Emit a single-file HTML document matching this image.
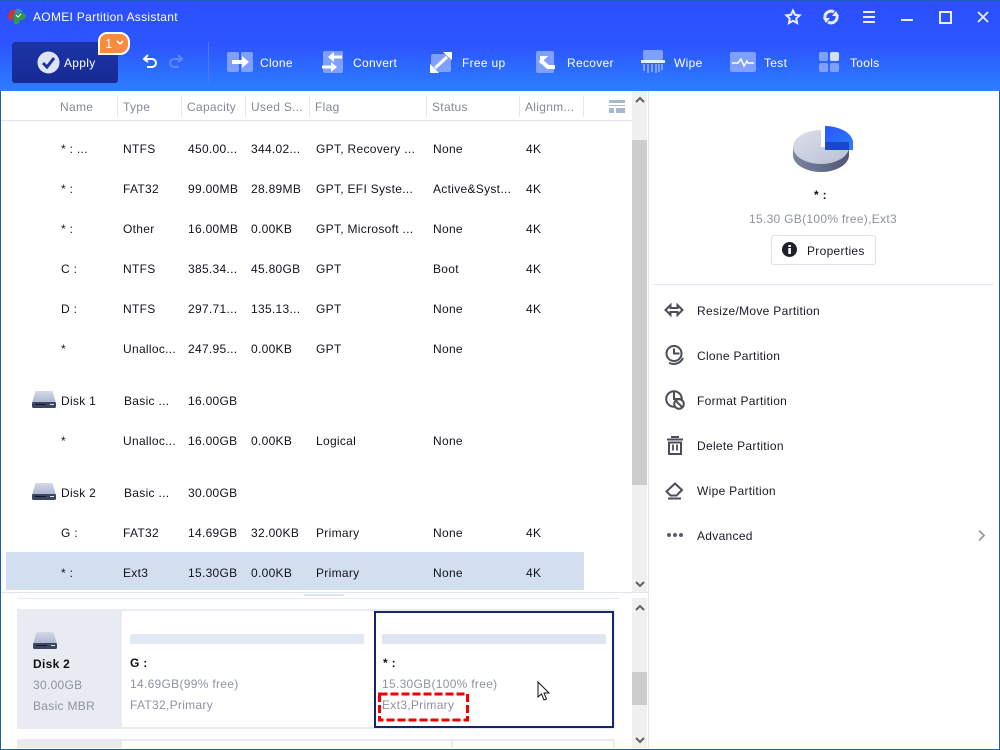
<!DOCTYPE html>
<html><head><meta charset="utf-8"><style>
html,body{margin:0;padding:0;background:#fff}
#p{position:relative;width:1000px;height:750px;overflow:hidden;background:#fff;font:12px "Liberation Sans","DejaVu Sans",sans-serif;color:#12121e}
#p div,#p span.t,#p svg{position:absolute}
.t{position:absolute;white-space:nowrap;line-height:16px;letter-spacing:.3px}
.h{color:#858a97;top:99px}
.w{color:#fff}
.g{color:#8f939f}
.s{position:absolute;width:1px;top:96px;height:21px;background:#e6eaf0}
.m{left:697px;color:#1a1a26}
</style></head><body><div id="p">
<div style="left:0;top:0;width:1000px;height:91px;background:linear-gradient(#2b4fff 0,#2d55ff 50%,#2b7fff 100%)"></div>
<div style="left:0;top:0;width:1000px;height:1px;background:#1a5cb8"></div>

<svg style="left:7px;top:8px" width="20" height="17" viewBox="0 0 20 17"><path d="M1 9C1 4 5 1 9 1L9 5L6 7L6 12L2 12Z" fill="#d8302c"/><path d="M9 1C11 0 15 1 16 4L10 6L7 6Z" fill="#2c8fc8"/><path d="M6 7L14 4L19 7L18 11L13 12L12 16L7 16L7 12Z" fill="#2f9a4c"/><path d="M9 7l2 2 3-3" stroke="#fff" fill="none"/></svg>
<span class="t w" style="left:33px;top:9px">AOMEI Partition Assistant</span>

<svg style="left:784px;top:8px" width="18" height="18" viewBox="0 0 18 18"><path d="M9 2.500l2 4.300 4.600.6-3.400 3.100.9 4.600L9 12.800l-4.100 2.300.9-4.600L2.400 7.400l4.600-.6z" fill="none" stroke="#e8eeff" stroke-width="2"/></svg>
<svg style="left:822px;top:8px" width="18" height="18" viewBox="0 0 18 18"><path d="M3 10a6 6 0 0 1 9-6M15 8a6 6 0 0 1-9 6" fill="none" stroke="#e8eeff" stroke-width="3"/><path d="M10 8h7l-3-5zM8 10H1l3 5z" fill="#e8eeff"/></svg>
<div style="left:863px;top:11px;width:12px;height:2px;background:#e8eeff"></div>
<div style="left:863px;top:16px;width:12px;height:2px;background:#e8eeff"></div>
<div style="left:863px;top:21px;width:12px;height:2px;background:#e8eeff"></div>
<div style="left:901px;top:19px;width:12px;height:2px;background:#e8eeff"></div>
<div style="left:939px;top:11px;width:9px;height:9px;border:2px solid #e8eeff"></div>
<svg style="left:977px;top:11px" width="12" height="12" viewBox="0 0 12 12"><path d="M1 1l10 10M11 1L1 11" stroke="#e8eeff" stroke-width="1.800"/></svg>

<div style="left:12px;top:42px;width:106px;height:41px;border-radius:3px;background:linear-gradient(#1b35a5,#172a96)"></div>
<svg style="left:37px;top:51px" width="23" height="23" viewBox="0 0 23 23"><circle cx="11.500" cy="11.500" r="11" fill="#dfe3f2"/><path d="M6 12l4 4 7-9" fill="none" stroke="#1c339e" stroke-width="3"/></svg>
<span class="t w" style="left:64px;top:55px">Apply</span>
<div style="left:98px;top:32px;width:28px;height:19px;background:#fb8a3c;border:2px solid #fff;border-radius:9px 10px 10px 0"></div>
<span class="t w" style="left:105px;top:36px;font-size:13px">1</span>
<svg style="left:116px;top:40px" width="8" height="6" viewBox="0 0 8 6"><path d="M1 1l3 3 3-3" fill="none" stroke="#fff" stroke-width="1.600"/></svg>

<svg style="left:142px;top:54px" width="16" height="14" viewBox="0 0 16 14"><path d="M6 1L2 5l4 3M2 5h8a4 4 0 0 1 0 8H5" fill="none" stroke="#fff" stroke-width="2"/></svg>
<svg style="left:168px;top:54px" width="16" height="14" viewBox="0 0 16 14"><path d="M10 1l4 4-4 3M14 5H6a4 4 0 0 0 0 8h5" fill="none" stroke="#5e87ff" stroke-width="2"/></svg>
<div style="left:208px;top:42px;width:1px;height:40px;background:#4b78ff"></div>

<svg style="left:227px;top:52px" width="26" height="20" viewBox="0 0 26 20"><rect x="0" width="12" height="20" rx="2" fill="#7fa0ff"/><rect x="14" width="12" height="20" rx="2" fill="#7fa0ff"/><path d="M5 10h13" stroke="#fff" stroke-width="4"/><path d="M15 4l7 6-7 6z" fill="#fff"/></svg>
<span class="t w" style="left:260px;top:55px">Clone</span>
<svg style="left:322px;top:51px" width="22" height="22" viewBox="0 0 22 22"><rect x="1" y="0" width="20" height="22" rx="2" fill="#7fa0ff"/><path d="M20 6H10" stroke="#fff" stroke-width="3"/><path d="M12 1L6 6l6 5z" fill="#fff"/><path d="M0 16h10" stroke="#fff" stroke-width="3"/><path d="M9 11l6 5-6 5z" fill="#fff"/></svg>
<span class="t w" style="left:353px;top:55px">Convert</span>
<svg style="left:430px;top:52px" width="22" height="21" viewBox="0 0 22 21"><rect x="1" y="2" width="20" height="18" rx="2" fill="#7fa0ff"/><path d="M5 16L17 5" stroke="#fff" stroke-width="3"/><path d="M13 0h9v8zM0 12v9h9z" fill="#fff"/></svg>
<span class="t w" style="left:462px;top:55px">Free up</span>
<svg style="left:536px;top:51px" width="23" height="22" viewBox="0 0 23 22"><rect width="18" height="22" rx="2" fill="#7fa0ff"/><path d="M4 9l8 7h7" fill="none" stroke="#fff" stroke-width="4"/><path d="M4 5h8l-8 8z" fill="#fff"/></svg>
<span class="t w" style="left:567px;top:55px">Recover</span>
<svg style="left:641px;top:50px" width="24" height="24" viewBox="0 0 24 24"><rect x="2" width="20" height="10" rx="2" fill="#7fa0ff"/><rect x="0" y="10" width="24" height="3" fill="#e8eeff"/><path d="M3 14v7M7 14v9M11 14v8M15 14v9M18 14v8M21 14v6" stroke="#7fa0ff" stroke-width="2"/></svg>
<span class="t w" style="left:674px;top:55px">Wipe</span>
<svg style="left:730px;top:52px" width="26" height="20" viewBox="0 0 26 20"><rect width="26" height="20" rx="2" fill="#7fa0ff"/><path d="M2 11h6l3-4 3 7 3-5 1 2h6" fill="none" stroke="#fff" stroke-width="1.500"/></svg>
<span class="t w" style="left:764px;top:55px">Test</span>
<svg style="left:819px;top:52px" width="20" height="20" viewBox="0 0 20 20"><rect width="9" height="9" rx="2" fill="#7fa0ff"/><rect x="11" width="9" height="9" rx="2" fill="#d5deff"/><rect y="11" width="9" height="9" rx="2" fill="#7fa0ff"/><rect x="11" y="11" width="9" height="9" rx="2" fill="#7fa0ff"/></svg>
<span class="t w" style="left:850px;top:55px">Tools</span>

<span class="t h" style="left:60px">Name</span><span class="s" style="left:117px"></span>
<span class="t h" style="left:123px">Type</span><span class="s" style="left:181px"></span>
<span class="t h" style="left:187px">Capacity</span><span class="s" style="left:245px"></span>
<span class="t h" style="left:251px">Used S...</span><span class="s" style="left:309px"></span>
<span class="t h" style="left:315px">Flag</span><span class="s" style="left:426px"></span>
<span class="t h" style="left:432px">Status</span><span class="s" style="left:519px"></span>
<span class="t h" style="left:525px">Alignm...</span><span class="s" style="left:583px"></span>
<div style="left:609px;top:100px;width:16px;height:3px;background:#a9b6cc"></div>
<div style="left:609px;top:105px;width:16px;height:1px;background:#a9b6cc"></div>
<div style="left:609px;top:108px;width:5px;height:5px;background:#a9b6cc"></div>
<div style="left:616px;top:108px;width:9px;height:5px;background:#a9b6cc"></div>
<div style="left:0;top:120px;width:632px;height:1px;background:#dfe5ee"></div>

<div style="left:6px;top:552px;width:578px;height:38px;background:#d3dfee"></div>

<span class="t" style="left:61px;top:141px">* : ...</span><span class="t" style="left:123px;top:141px">NTFS</span><span class="t" style="left:188px;top:141px">450.00...</span><span class="t" style="left:251px;top:141px">344.02...</span><span class="t" style="left:316px;top:141px">GPT, Recovery ...</span><span class="t" style="left:433px;top:141px">None</span><span class="t" style="left:526px;top:141px">4K</span>
<span class="t" style="left:61px;top:181px">* :</span><span class="t" style="left:123px;top:181px">FAT32</span><span class="t" style="left:188px;top:181px">99.00MB</span><span class="t" style="left:251px;top:181px">28.89MB</span><span class="t" style="left:316px;top:181px">GPT, EFI Syste...</span><span class="t" style="left:433px;top:181px">Active&amp;Syst...</span><span class="t" style="left:526px;top:181px">4K</span>
<span class="t" style="left:61px;top:221px">* :</span><span class="t" style="left:123px;top:221px">Other</span><span class="t" style="left:188px;top:221px">16.00MB</span><span class="t" style="left:251px;top:221px">0.00KB</span><span class="t" style="left:316px;top:221px">GPT, Microsoft ...</span><span class="t" style="left:433px;top:221px">None</span><span class="t" style="left:526px;top:221px">4K</span>
<span class="t" style="left:61px;top:261px">C :</span><span class="t" style="left:123px;top:261px">NTFS</span><span class="t" style="left:188px;top:261px">385.34...</span><span class="t" style="left:251px;top:261px">45.80GB</span><span class="t" style="left:316px;top:261px">GPT</span><span class="t" style="left:433px;top:261px">Boot</span><span class="t" style="left:526px;top:261px">4K</span>
<span class="t" style="left:61px;top:301px">D :</span><span class="t" style="left:123px;top:301px">NTFS</span><span class="t" style="left:188px;top:301px">297.71...</span><span class="t" style="left:251px;top:301px">135.13...</span><span class="t" style="left:316px;top:301px">GPT</span><span class="t" style="left:433px;top:301px">None</span><span class="t" style="left:526px;top:301px">4K</span>
<span class="t" style="left:61px;top:341px">*</span><span class="t" style="left:123px;top:341px">Unalloc...</span><span class="t" style="left:188px;top:341px">247.95...</span><span class="t" style="left:251px;top:341px">0.00KB</span><span class="t" style="left:316px;top:341px">GPT</span><span class="t" style="left:433px;top:341px">None</span>

<svg style="left:32px;top:391px" width="24" height="18" viewBox="0 0 24 18"><defs><linearGradient id="d" x1="0" y1="0" x2="0" y2="1"><stop offset="0" stop-color="#d4d9e8"/><stop offset="1" stop-color="#aab4cc"/></linearGradient></defs><path d="M3.500 0h17L24 12H0z" fill="url(#d)"/><rect x="0" y="11" width="24" height="6" rx="1.500" fill="#3d4560"/><rect x="3" y="13" width="11" height="1" fill="#14182a"/><rect x="18" y="13" width="4" height="1" fill="#dfe3ee"/></svg>
<span class="t" style="left:61px;top:393px">Disk 1</span><span class="t" style="left:124px;top:393px">Basic ...</span><span class="t" style="left:188px;top:393px">16.00GB</span>
<span class="t" style="left:61px;top:433px">*</span><span class="t" style="left:123px;top:433px">Unalloc...</span><span class="t" style="left:188px;top:433px">16.00GB</span><span class="t" style="left:251px;top:433px">0.00KB</span><span class="t" style="left:316px;top:433px">Logical</span><span class="t" style="left:433px;top:433px">None</span>

<svg style="left:32px;top:483px" width="24" height="18" viewBox="0 0 24 18"><path d="M3.500 0h17L24 12H0z" fill="url(#d)"/><rect x="0" y="11" width="24" height="6" rx="1.500" fill="#3d4560"/><rect x="3" y="13" width="11" height="1" fill="#14182a"/><rect x="18" y="13" width="4" height="1" fill="#dfe3ee"/></svg>
<span class="t" style="left:61px;top:485px">Disk 2</span><span class="t" style="left:124px;top:485px">Basic ...</span><span class="t" style="left:188px;top:485px">30.00GB</span>
<span class="t" style="left:61px;top:525px">G :</span><span class="t" style="left:123px;top:525px">FAT32</span><span class="t" style="left:188px;top:525px">14.69GB</span><span class="t" style="left:251px;top:525px">32.00KB</span><span class="t" style="left:316px;top:525px">Primary</span><span class="t" style="left:433px;top:525px">None</span><span class="t" style="left:526px;top:525px">4K</span>
<span class="t" style="left:61px;top:565px">* :</span><span class="t" style="left:123px;top:565px">Ext3</span><span class="t" style="left:188px;top:565px">15.30GB</span><span class="t" style="left:251px;top:565px">0.00KB</span><span class="t" style="left:316px;top:565px">Primary</span><span class="t" style="left:433px;top:565px">None</span><span class="t" style="left:526px;top:565px">4K</span>

<div style="left:632px;top:91px;width:15px;height:501px;background:#f0f0f0"></div>
<div style="left:632px;top:140px;width:15px;height:345px;background:#cdcdcd"></div>
<svg style="left:635px;top:96px" width="10" height="7" viewBox="0 0 10 7"><path d="M1 6l4-4 4 4" fill="none" stroke="#606060" stroke-width="2"/></svg>
<svg style="left:635px;top:581px" width="10" height="7" viewBox="0 0 10 7"><path d="M1 1l4 4 4-4" fill="none" stroke="#606060" stroke-width="2"/></svg>

<div style="left:0;top:592px;width:648px;height:1px;background:#dfe5ee"></div>
<div style="left:304px;top:594px;width:40px;height:2px;background:#dfe5ee"></div>
<div style="left:17px;top:598px;width:603px;height:1px;background:#e6eaf0"></div>

<div style="left:17px;top:609px;width:598px;height:120px;background:#e8ebf1"></div>
<div style="left:122px;top:611px;width:252px;height:116px;background:#fff"></div>
<div style="left:374px;top:611px;width:236px;height:113px;background:#fff;border:2px solid #14266e"></div>
<svg style="left:33px;top:632px" width="24" height="18" viewBox="0 0 24 18"><path d="M3.500 0h17L24 12H0z" fill="url(#d)"/><rect x="0" y="11" width="24" height="6" rx="1.500" fill="#3d4560"/><rect x="3" y="13" width="11" height="1" fill="#14182a"/><rect x="18" y="13" width="4" height="1" fill="#dfe3ee"/></svg>
<span class="t" style="left:33px;top:656px;font-weight:bold;color:#111">Disk 2</span>
<span class="t g" style="left:33px;top:677px">30.00GB</span>
<span class="t g" style="left:33px;top:698px">Basic MBR</span>

<div style="left:130px;top:634px;width:234px;height:10px;background:#e3e9f3;border-radius:2px"></div>
<span class="t" style="left:130px;top:655px;font-weight:bold;color:#111">G :</span>
<span class="t g" style="left:130px;top:676px">14.69GB(99% free)</span>
<span class="t g" style="left:130px;top:697px">FAT32,Primary</span>

<div style="left:382px;top:634px;width:224px;height:10px;background:#e0e6f1;border-radius:2px"></div>
<span class="t" style="left:383px;top:655px;font-weight:bold;color:#111">* :</span>
<span class="t g" style="left:382px;top:676px">15.30GB(100% free)</span>
<span class="t g" style="left:382px;top:697px">Ext3,Primary</span>
<svg style="left:377px;top:691px" width="93" height="32" viewBox="0 0 93 32"><rect x="2.500" y="3" width="88" height="26" fill="none" stroke="#f00000" stroke-width="3" stroke-dasharray="8 3"/></svg>
<svg style="left:536px;top:680px" width="15" height="22" viewBox="0 0 15 22"><path d="M2 2v15l3.500-3 2.500 6 2.500-1-2.500-6h5z" fill="#fff" stroke="#111" stroke-width="1"/></svg>

<div style="left:17px;top:739px;width:598px;height:9px;background:#e8ebf1"></div>
<div style="left:122px;top:741px;width:329px;height:7px;background:#fff"></div>
<div style="left:453px;top:741px;width:160px;height:7px;background:#fff"></div>

<div style="left:632px;top:598px;width:15px;height:150px;background:#f0f0f0"></div>
<div style="left:632px;top:672px;width:15px;height:33px;background:#cdcdcd"></div>
<svg style="left:635px;top:604px" width="10" height="7" viewBox="0 0 10 7"><path d="M1 6l4-4 4 4" fill="none" stroke="#606060" stroke-width="2"/></svg>
<svg style="left:635px;top:737px" width="10" height="7" viewBox="0 0 10 7"><path d="M1 1l4 4 4-4" fill="none" stroke="#606060" stroke-width="2"/></svg>
<div style="left:648px;top:91px;width:1px;height:657px;background:#dfe6f2"></div>

<svg style="left:792px;top:125px" width="62" height="48" viewBox="0 0 62 48"><defs><linearGradient id="a" x1="0" y1="0" x2="1" y2="1"><stop offset="0" stop-color="#dde0ea"/><stop offset="1" stop-color="#b9c0d6"/></linearGradient><linearGradient id="b" x1="0" y1="0" x2="1" y2="0"><stop offset="0" stop-color="#7b84a0"/><stop offset="1" stop-color="#4f5876"/></linearGradient><linearGradient id="c" x1="0" y1="0" x2="1" y2="1"><stop offset="0" stop-color="#2a55ff"/><stop offset="1" stop-color="#2b7fff"/></linearGradient></defs><path d="M1 22v8A28 17 0 0 0 57 30v-8z" fill="url(#b)"/><path d="M29 22V5A28 17 0 1 0 57 22Z" fill="url(#a)"/><path d="M33 1A28 17 0 0 1 61 17V25H33Z" fill="url(#c)"/><path d="M33 17H57V25H33Z" fill="#1c47c8"/></svg>
<span class="t" style="left:814px;top:187px;font-weight:bold;color:#111">* :</span>
<span class="t g" style="left:749px;top:211px">15.30 GB(100% free),Ext3</span>
<div style="left:771px;top:235px;width:103px;height:28px;border:1px solid #dbe2ec;border-radius:3px;background:#fff"></div>
<svg style="left:782px;top:242px" width="15" height="15" viewBox="0 0 15 15"><circle cx="7.500" cy="7.500" r="7.500" fill="#1c1f2c"/><rect x="6.300" y="6" width="2.600" height="6" fill="#fff"/><rect x="6.300" y="3" width="2.600" height="2" fill="#fff"/></svg>
<span class="t" style="left:807px;top:243px;color:#1a1a26">Properties</span>
<div style="left:653px;top:284px;width:341px;height:1px;background:#e3e9f3"></div>

<svg style="left:664px;top:302px" width="20" height="16" viewBox="0 0 20 16"><path d="M1.500 8l5-5v3h7V3l5 5-5 5v-3h-7v3z" fill="none" stroke="#4a4e58" stroke-width="2"/></svg>
<span class="t m" style="top:303px">Resize/Move Partition</span>
<svg style="left:665px;top:345px" width="20" height="20" viewBox="0 0 20 20"><circle cx="9" cy="8.500" r="7.500" fill="none" stroke="#4a4e58" stroke-width="2"/><path d="M9 3.500v5h5.500" fill="none" stroke="#4a4e58" stroke-width="2"/><path d="M4 18c5 2 11 1 14-5" fill="none" stroke="#4a4e58" stroke-width="2"/></svg>
<span class="t m" style="top:348px">Clone Partition</span>
<svg style="left:665px;top:390px" width="20" height="20" viewBox="0 0 20 20"><circle cx="9" cy="9" r="7.800" fill="none" stroke="#4a4e58" stroke-width="2"/><path d="M9 1v8h8" fill="none" stroke="#4a4e58" stroke-width="2"/><circle cx="14" cy="14" r="4.800" fill="#fff" stroke="#4a4e58" stroke-width="2"/><path d="M10.800 10.800l6.400 6.400" stroke="#4a4e58" stroke-width="2"/></svg>
<span class="t m" style="top:393px">Format Partition</span>
<svg style="left:667px;top:436px" width="16" height="19" viewBox="0 0 16 19"><path d="M0 3.500h16" stroke="#4a4e58" stroke-width="2"/><path d="M4 1h8" stroke="#4a4e58" stroke-width="2"/><path d="M2 6.500h12V18H2z" fill="none" stroke="#4a4e58" stroke-width="2"/><path d="M6 8.500v6M10 8.500v6" stroke="#4a4e58" stroke-width="1.800"/></svg>
<span class="t m" style="top:438px">Delete Partition</span>
<svg style="left:665px;top:481px" width="19" height="19" viewBox="0 0 19 19"><path d="M1.500 10.500L10 2.500l7 6.500-5.500 5.500H5.500z" fill="none" stroke="#4a4e58" stroke-width="2"/><path d="M3 17.500h13" stroke="#4a4e58" stroke-width="2"/></svg>
<span class="t m" style="top:483px">Wipe Partition</span>
<div style="left:667px;top:533px;width:4px;height:4px;border-radius:2px;background:#5a5e68"></div>
<div style="left:673px;top:533px;width:4px;height:4px;border-radius:2px;background:#5a5e68"></div>
<div style="left:679px;top:533px;width:4px;height:4px;border-radius:2px;background:#5a5e68"></div>
<span class="t m" style="top:528px">Advanced</span>
<svg style="left:977px;top:529px" width="9" height="13" viewBox="0 0 9 13"><path d="M2 1.500l5 5-5 5" fill="none" stroke="#9a9ea8" stroke-width="1.800"/></svg>

<div style="left:0;top:91px;width:1px;height:659px;background:#1a5cb8"></div>
<div style="left:999px;top:91px;width:1px;height:659px;background:#1a5cb8"></div>
<div style="left:0;top:749px;width:1000px;height:1px;background:#1a5cb8"></div>
</div></body></html>
